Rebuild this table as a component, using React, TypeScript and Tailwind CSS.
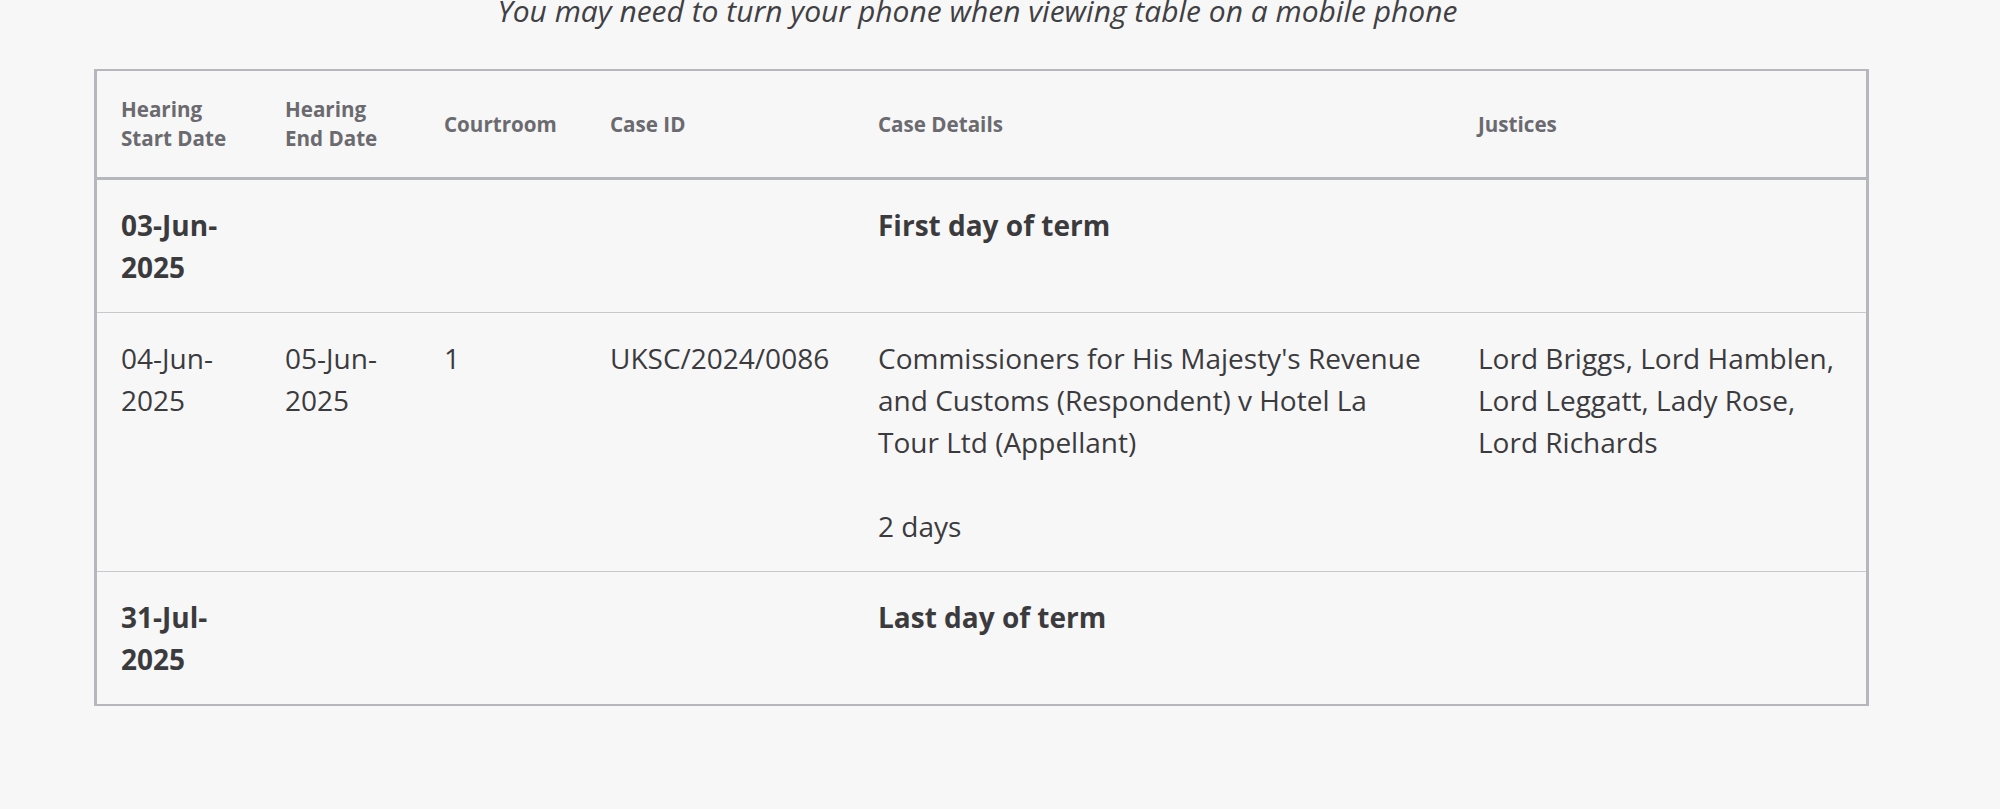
import type { JSX } from "react";

type Hearing = {
  start: string;
  end?: string;
  court?: string;
  caseId?: string;
  details: string;
  extra?: string;
  justices?: string;
  marker?: boolean;
};

const rows: Hearing[] = [
  { start: "03-Jun-2025", details: "First day of term", marker: true },
  {
    start: "04-Jun-2025",
    end: "05-Jun-2025",
    court: "1",
    caseId: "UKSC/2024/0086",
    details:
      "Commissioners for His Majesty's Revenue and Customs (Respondent) v Hotel La Tour Ltd (Appellant)",
    extra: "2 days",
    justices: "Lord Briggs, Lord Hamblen, Lord Leggatt, Lady Rose, Lord Richards",
  },
  { start: "31-Jul-2025", details: "Last day of term", marker: true },
];

function splitDate(d?: string) {
  if (!d) return null;
  const parts = d.split("-");
  return (
    <>
      {parts[0]}-{parts[1]}-
      <br />
      {parts[2]}
    </>
  );
}

export default function App(): JSX.Element {
  return (
    <div className="min-h-[809px] bg-[#f7f7f7] font-['Open_Sans',sans-serif] overflow-hidden">
      <div className="ml-[94px] w-[1775px]">
        <p className="-mt-[10px] pr-[8px] text-center text-[30px] leading-[42px] italic font-normal text-[#404043]">
          You may need to turn your phone when viewing table on a mobile phone
        </p>
        <div className="mt-[37px] border-x-[3px] border-y-2 border-[#b6b6bd]">
          <table className="w-full table-fixed border-collapse">
            <colgroup>
              <col className="w-[164px]" />
              <col className="w-[159px]" />
              <col className="w-[166px]" />
              <col className="w-[268px]" />
              <col className="w-[600px]" />
              <col className="w-[412px]" />
            </colgroup>
            <thead>
              <tr className="border-b-[3px] border-[#b6b6bd] text-left text-[20.6px] leading-[29px] font-bold text-[#6a6a6f]">
                <th className="px-6 py-6 align-middle font-bold">
                  Hearing
                  <br />
                  Start Date
                </th>
                <th className="px-6 py-6 align-middle font-bold">
                  Hearing
                  <br />
                  End Date
                </th>
                <th className="px-6 py-6 align-middle font-bold">Courtroom</th>
                <th className="px-6 py-6 align-middle font-bold">Case ID</th>
                <th className="px-6 py-6 align-middle font-bold">Case Details</th>
                <th className="px-6 py-6 align-middle font-bold">Justices</th>
              </tr>
            </thead>
            <tbody className="text-[28px] leading-[42px] text-[#3b3b3e]">
              {rows.map((r, i) => (
                <tr
                  key={i}
                  className={`align-top ${i < rows.length - 1 ? "border-b border-[#c9c9cd]" : ""} ${r.marker ? "font-bold" : ""}`}
                >
                  <td className="px-6 py-6">{splitDate(r.start)}</td>
                  <td className="px-6 py-6">{splitDate(r.end)}</td>
                  <td className="px-6 py-6">{r.court}</td>
                  <td className="px-6 py-6">{r.caseId}</td>
                  <td className="px-6 py-6">
                    <div>{r.details}</div>
                    {r.extra && <div className="mt-[42px]">{r.extra}</div>}
                  </td>
                  <td className="px-6 py-6">{r.justices}</td>
                </tr>
              ))}
            </tbody>
          </table>
        </div>
      </div>
    </div>
  );
}
